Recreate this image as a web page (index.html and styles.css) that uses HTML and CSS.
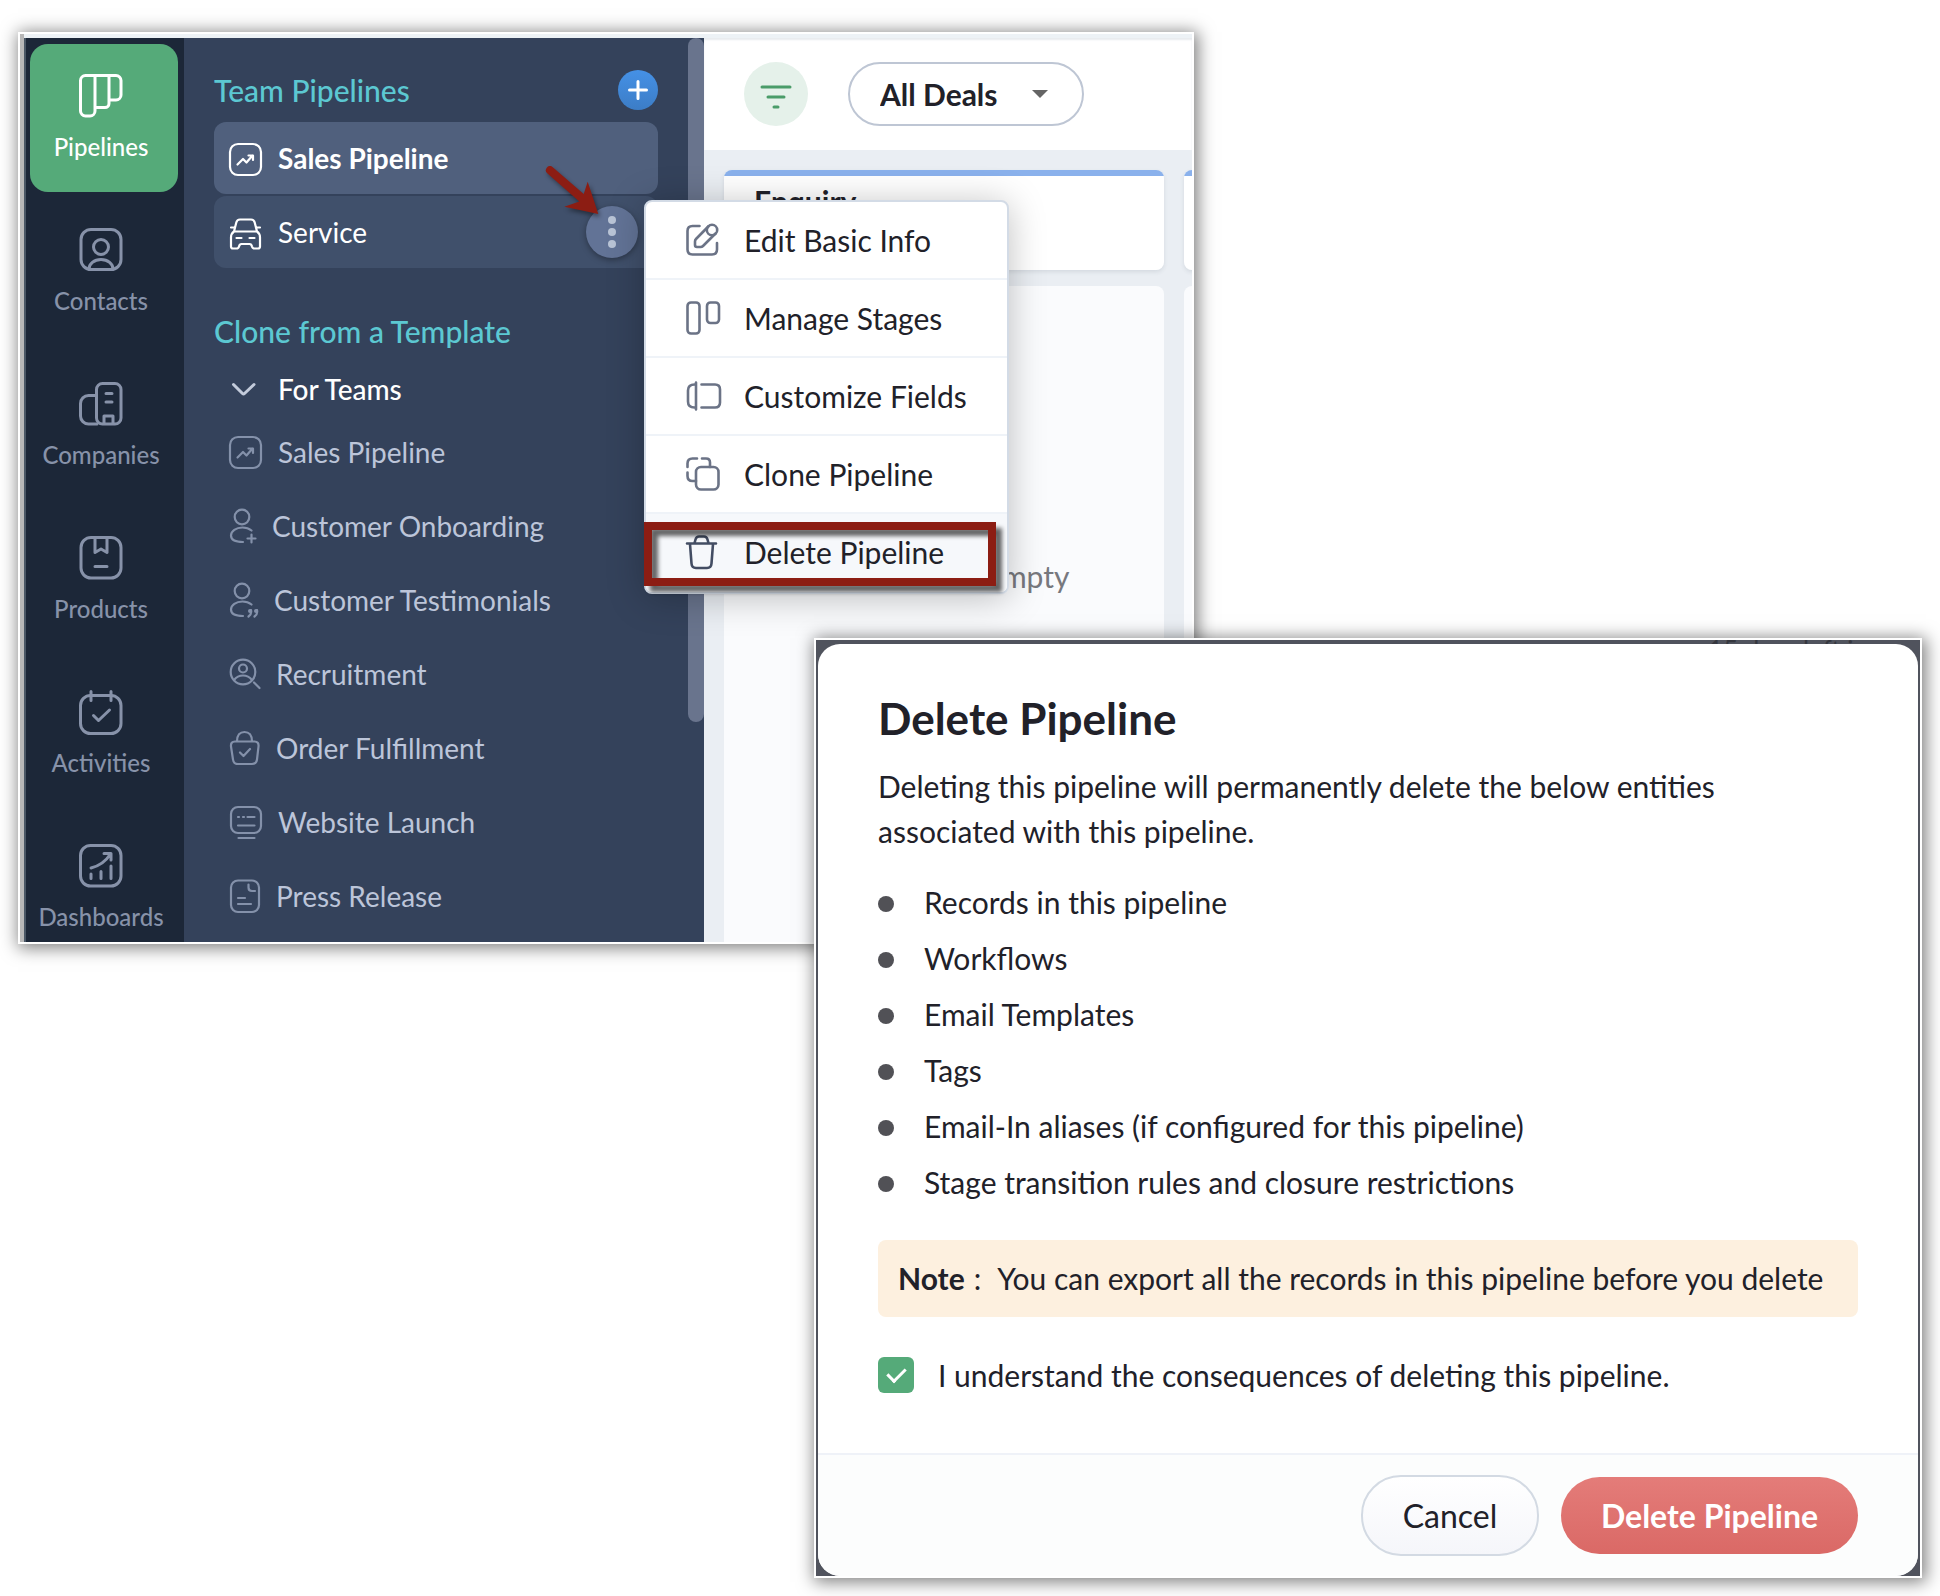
FILE: index.html
```html
<!DOCTYPE html>
<html lang="en">
<head>
<meta charset="utf-8">
<meta name="viewport" content="width=device-width, initial-scale=1">
<title>Delete Pipeline</title>
<link rel="stylesheet" href="styles.css">
</head>
<body>
<div class="stage">
  <section class="window app" aria-label="Pipelines">
    <nav class="nav">
      <a class="nav-item nav-item-active" href="#pipelines">
        <svg class="nav-icon" viewBox="0 0 44 44"><path d="M16 1.5H6.5a5 5 0 0 0-5 5v30.500a5 5 0 0 0 5 5H11a5 5 0 0 0 5-5zM16 1.500H30V29.500a4 4 0 0 1-4 4H16M30 1.500h7a5 5 0 0 1 5 5V21a5 5 0 0 1-5 5h-7"/></svg>
        Pipelines</a>
      <a class="nav-item" href="#contacts">
        <svg class="nav-icon" viewBox="0 0 44 44"><rect x="2" y="1.500" width="40" height="40" rx="10"/><circle cx="22" cy="19" r="7.500"/><path d="M10 41c0-5 5-9.500 12-9.500S34 36 34 41"/></svg>
        Contacts</a>
      <a class="nav-item" href="#companies">
        <svg class="nav-icon" viewBox="0 0 44 44"><path d="M17.500 13.500H9.500a8 8 0 0 0-8 8V34a8 8 0 0 0 8 8H18"/><rect x="17.500" y="1.500" width="24.500" height="40.500" rx="6"/><path d="M27 11.500h6M27 20h6M25 41v-7h9v7"/></svg>
        Companies</a>
      <a class="nav-item" href="#products">
        <svg class="nav-icon" viewBox="0 0 44 44"><rect x="2" y="1.500" width="40" height="40.500" rx="10"/><path d="M16 2v14.500l6-3.500 6 3.500V2M16 30.500h12"/></svg>
        Products</a>
      <a class="nav-item" href="#activities">
        <svg class="nav-icon" viewBox="0 0 44 44"><rect x="1.500" y="5.500" width="40.500" height="38" rx="10"/><path d="M12 1.500v9M32 1.500v9M14.500 25.500l5 5L30.500 20"/></svg>
        Activities</a>
      <a class="nav-item" href="#dashboards">
        <svg class="nav-icon" viewBox="0 0 44 44"><rect x="1.500" y="1.500" width="40.500" height="40.500" rx="10"/><path d="M12 24c8-2 15-7 19.500-14M25 9.500h7V16M12 30v4.500M22 27.500v7M32 22v12.500"/></svg>
        Dashboards</a>
    </nav>

    <aside class="sidebar">
      <div class="sidebar-scroll" aria-hidden="true"></div>
      <div class="section-head">
        <h2 class="section-title">Team Pipelines</h2>
        <button class="add-button" type="button" aria-label="Add pipeline">
          <svg class="add-icon" viewBox="0 0 20 20"><path d="M10 1.500v17M1.500 10h17"/></svg>
        </button>
      </div>
      <ul class="team-list">
        <li class="team-row team-row-active">
          <svg class="row-icon w32" viewBox="0 0 32 34"><rect x="1" y="1" width="31" height="31" rx="8"/><path d="M8.500 21.500l5.500-5.500 3.500 3.500 6-7M19.500 12.500h4.500v4.500"/></svg>
          <a class="row-link" href="#sales">Sales Pipeline</a>
        </li>
        <li class="team-row">
          <svg class="row-icon w32" viewBox="0 0 32 34"><path d="M5 14.500L7.300 5.500Q8 2.500 11 2.500H22Q25 2.500 25.700 5.500L28 14.500zM2 10.500h3M28 10.500h3M5 14.500q-3 2-3 6V29.500q0 2 2 2h3.500q2 0 2.500-2 .6-2.500 2.500-2.500h8q2 0 2.500 2.500.5 2 2.500 2H29q2 0 2-2v-9q0-4-3-6M7.500 21h5M20.500 21h5"/></svg>
          <a class="row-link" href="#service">Service</a>
          <button class="more-button" type="button" aria-label="More actions">
            <svg class="more-icon" viewBox="0 0 8 32"><circle cx="4" cy="4" r="4"/><circle cx="4" cy="16" r="4"/><circle cx="4" cy="28" r="4"/></svg>
          </button>
          <div class="menu">
            <button class="menu-item" type="button">
              <svg class="menu-icon" viewBox="0 0 36 34"><path d="M13.500 3H6.500Q1.500 3 1.500 8V26.500q0 5 5 5H26q5 0 5-5V20M22.300 3.500L10 16q-1 1-1 2.500V22q0 2 2 2h3.500q1.500 0 2.500-1L29.500 10.500"/><circle cx="26" cy="7" r="5.200"/></svg>
              Edit Basic Info</button>
            <button class="menu-item" type="button">
              <svg class="menu-icon" viewBox="0 0 36 34"><rect x="1.500" y="1.500" width="12" height="31" rx="3.500"/><rect x="21" y="1.500" width="12" height="20.500" rx="3.500"/></svg>
              Manage Stages</button>
            <button class="menu-item" type="button">
              <svg class="menu-icon" viewBox="0 0 36 34"><path d="M10 3.500v27M10 5.500H8.500Q2 5.500 2 11.500v11q0 6 6.500 6H10M15.500 5.500H29q5 0 5 5v13q0 5-5 5H15.500"/></svg>
              Customize Fields</button>
            <button class="menu-item" type="button">
              <svg class="menu-icon" viewBox="0 0 36 34"><rect x="10" y="10" width="22.500" height="22.500" rx="5"/><path d="M11 1.500H6.500Q1.500 1.500 1.500 6.500V10M16 1.500h4q4 0 4 4V10M1.500 15.500V19q0 5 5 5H10"/></svg>
              Clone Pipeline</button>
            <button class="menu-item menu-item-hover" type="button">
              <svg class="menu-icon" viewBox="0 0 36 34"><path d="M1 8.500h29M8.500 8l1-3.500Q10.300 1.500 13 1.500h5q2.700 0 3.500 3l1 3.500M4 9l1.500 19.500Q5.800 33 10 33H21q4.200 0 4.500-4.500L27 9"/></svg>
              Delete Pipeline</button>
            <div class="highlight" aria-hidden="true"></div>
          </div>
          <svg class="pointer" viewBox="0 0 60 52" aria-hidden="true"><path d="M6.500 1A4 4 0 0 0 1.500 7.500L33.300 35.500 18.300 40.700 52.300 48 41.700 15.700 37.700 28z"/></svg>
        </li>
      </ul>
      <h2 class="section-title section-title-clone">Clone from a Template</h2>
      <button class="group-toggle" type="button">
        <svg class="row-icon w32" viewBox="0 0 32 34"><path class="chevron" d="M4.500 12.500L13.500 21.500Q14.500 22.500 15.500 21.500L25 12.500"/></svg>
        For Teams</button>
      <ul class="template-list">
        <li><a class="template" href="#t1">
          <svg class="row-icon w32" viewBox="0 0 32 34"><rect x="1" y="2" width="31" height="31" rx="8"/><path d="M8.500 22.500l5.500-5.500 3.500 3.500 6-7M19.500 13.500h4.500v4.500"/></svg>
          Sales Pipeline</a></li>
        <li><a class="template" href="#t2">
          <svg class="row-icon w26" viewBox="0 0 26 34"><circle cx="13" cy="8" r="7.300"/><path d="M22.500 21.500C20 19.500 17 18.500 13.500 18.500 7 18.500 2 22 2 26.500S7 33 14 33M22.500 25.500v8M18.500 29.500h8"/></svg>
          Customer Onboarding</a></li>
        <li><a class="template" href="#t3">
          <svg class="row-icon w28" viewBox="0 0 28 34"><circle cx="13" cy="8" r="7.300"/><path d="M22.500 21.500C20 19.500 17 18.500 13.500 18.500 7 18.500 2 22 2 26.500S7 33 14 33M22 27q1 4-2.500 6.500M28 27q1 4-2.500 6.500"/><circle class="dot" cx="21" cy="28" r="2"/><circle class="dot" cx="27" cy="28" r="2"/></svg>
          Customer Testimonials</a></li>
        <li><a class="template" href="#t4">
          <svg class="row-icon w30" viewBox="0 0 30 34"><circle cx="14" cy="15" r="12.300"/><circle cx="14" cy="11.500" r="4"/><path d="M5 23q3.500-4.500 9-4.500t9 4.500M25 25.500l5.500 5.500"/></svg>
          Recruitment</a></li>
        <li><a class="template" href="#t5">
          <svg class="row-icon w30" viewBox="0 0 30 34"><path d="M8 10.500C8 4 11 1 15.500 1S23 4 23 10.500M6 10.500H25.500q4.500 0 4 5L28 28.500Q27.500 33 23 33H9Q4.500 33 4 28.500L2 15.500q-.5-5 4-5zM11 21.500l3.500 3.500L21 18"/></svg>
          Order Fulfillment</a></li>
        <li><a class="template" href="#t6">
          <svg class="row-icon w32" viewBox="0 0 32 34"><rect x="2" y="2" width="30" height="26" rx="7"/><path d="M9 12h1M14 12h1M18.500 12h7M9 20.500h16.500M9.500 33h16"/></svg>
          Website Launch</a></li>
        <li><a class="template" href="#t7">
          <svg class="row-icon w30" viewBox="0 0 30 34"><rect x="2" y="1.500" width="28" height="31.500" rx="7"/><path d="M19.500 5.500v3q0 3.500 3.500 3.500h3M9 19h7M9 25h13"/></svg>
          Press Release</a></li>
      </ul>
    </aside>

    <main class="content">
      <header class="toolbar">
        <button class="filter-button" type="button" aria-label="Filter">
          <svg class="filter-icon" viewBox="0 0 32 24"><path d="M2 2h28M8 12h16M14 22h4"/></svg>
        </button>
        <div class="select-wrap">
          <select class="deal-select" aria-label="Deals view"><option>All Deals</option></select>
          <svg class="caret" viewBox="0 0 16 8"><path d="M0 0h16L8 8z"/></svg>
        </div>
      </header>
      <div class="board">
        <section class="column">
          <h3 class="column-head">Enquiry</h3>
          <div class="column-body">This stage is empty</div>
        </section>
        <section class="column">
          <h3 class="column-head"></h3>
          <div class="column-body"></div>
        </section>
      </div>
    </main>
  </section>

  <section class="window overlay">
    <div class="trial" aria-hidden="true">15 days left in</div>
    <div class="dialog" role="dialog" aria-labelledby="dialog-title">
      <div class="dialog-body">
        <h1 class="dialog-title" id="dialog-title">Delete Pipeline</h1>
        <p class="dialog-text">Deleting this pipeline will permanently delete the below entities<br>associated with this pipeline.</p>
        <ul class="entity-list">
          <li class="entity">Records in this pipeline</li>
          <li class="entity">Workflows</li>
          <li class="entity">Email Templates</li>
          <li class="entity">Tags</li>
          <li class="entity">Email-In aliases (if configured for this pipeline)</li>
          <li class="entity">Stage transition rules and closure restrictions</li>
        </ul>
        <p class="note"><span class="note-label"><strong>Note</strong><span>:</span></span><span>You can export all the records in this pipeline before you delete</span></p>
        <label class="consent"><input class="checkbox" type="checkbox" checked>I understand the consequences of deleting this pipeline.</label>
      </div>
      <footer class="dialog-footer">
        <button class="button button-cancel" type="button">Cancel</button>
        <button class="button button-danger" type="button">Delete Pipeline</button>
      </footer>
    </div>
  </section>
</div>
</body>
</html>
```
FILE: styles.css
```css
* { box-sizing: border-box; }

body {
  margin: 0;
  background: #fff;
  color: #212129;
  font: 30px/36px Lato, Carlito, sans-serif;
}

h1, h2, h3, p, ul { margin: 0; padding: 0; }
ul { list-style: none; }
a { color: inherit; text-decoration: none; }
button, select { margin: 0; padding: 0; border: 0; background: none; color: inherit; font: inherit; }
svg { display: block; flex: none; overflow: visible; fill: none; stroke: currentColor; stroke-linecap: round; stroke-linejoin: round; }

.stage {
  display: grid;
  grid-template-columns: minmax(0, 796fr) minmax(0, 380fr) minmax(0, 728fr);
  grid-template-rows: 606px 306px auto;
  padding: 32px 18px 18px;
}

.window { border: 2px solid #fff; box-shadow: 2px 2px 16px 2px rgba(0, 0, 0, 0.5); }

.app {
  grid-area: 1 / 1 / 3 / 3;
  display: grid;
  grid-template-columns: 160px 520px minmax(0, 1fr);
  min-height: 0;
  overflow: hidden;
  padding: 4px 0 0 4px;
  background: linear-gradient(90deg, #b8b8b8 4px, #edf2f6 4px);
}

/* Primary navigation */
.nav {
  display: flex;
  flex-direction: column;
  gap: 6px;
  min-height: 0;
  padding: 6px 6px 0 4px;
  border-left: 2px solid #4b5866;
  background: #1c2738;
}
.nav-item {
  display: flex;
  flex: none;
  flex-direction: column;
  align-items: center;
  gap: 15px;
  height: 148px;
  padding: 30px 6px 0 0;
  border-radius: 18px;
  color: #8792a9;
  font-size: 24px;
  font-weight: 500;
  line-height: 28px;
}
.nav-item-active { background: #55aa79; color: #fff; }
.nav-icon { width: 44px; height: 44px; stroke-width: 3; }

/* Pipeline sidebar */
.sidebar {
  position: relative;
  z-index: 1;
  min-height: 0;
  padding: 32px 46px 0 30px;
  background: #34425b;
  font-size: 28px;
}
.sidebar-scroll {
  position: absolute;
  top: 0;
  right: 0;
  width: 16px;
  height: 684px;
  border-radius: 8px;
  background: #69748d;
}
.section-head { display: flex; align-items: center; justify-content: space-between; height: 40px; margin-bottom: 12px; }
.section-title { color: #5cc8d2; font-size: 30px; font-weight: 500; }
.section-title-clone { margin-top: 31px; line-height: 64px; }
.add-button {
  display: grid;
  place-items: center;
  width: 40px;
  height: 40px;
  border-radius: 50%;
  background: linear-gradient(#4591e6, #3c7dc6);
  color: #fff;
}
.add-icon { width: 20px; height: 20px; stroke-width: 3; }

.team-list { display: grid; gap: 2px; }
.team-row {
  position: relative;
  display: flex;
  align-items: center;
  gap: 17px;
  height: 72px;
  padding: 0 20px 0 15px;
  border-radius: 12px;
  background: #40506b;
  color: #fff;
}
.team-row-active { background: #50607d; font-weight: 700; }
.row-link { flex: 1; }
.row-icon { height: 34px; stroke-width: 2.2; }
.team-row .row-icon { margin-top: 4px; }
.w26 { width: 26px; }
.w28 { width: 28px; }
.w30 { width: 30px; }
.w32 { width: 32px; }
.dot { fill: currentColor; stroke: none; }
.more-button {
  display: grid;
  place-items: center;
  width: 52px;
  height: 52px;
  border-radius: 50%;
  background: #627396;
  box-shadow: 0 2px 6px rgba(0, 0, 0, 0.35);
  color: #b9c4d6;
}
.more-icon { width: 8px; height: 32px; fill: currentColor; stroke: none; }
.pointer {
  position: absolute;
  top: -30px;
  left: 332px;
  width: 60px;
  height: 52px;
  fill: #8c1d13;
  stroke: none;
  filter: drop-shadow(2px 3px 2px rgba(0, 0, 0, 0.4));
}

.group-toggle { display: flex; align-items: center; gap: 17px; height: 52px; padding-left: 15px; color: #fff; font-weight: 500; }
.chevron { stroke: #c3cbdb; stroke-width: 3; }
.template { display: flex; align-items: center; gap: 17px; height: 74px; padding-left: 15px; color: #bcc5d9; }
.template .row-icon { color: #8491aa; }

/* Row actions menu */
.menu {
  position: absolute;
  top: 4px;
  left: 430px;
  width: 365px;
  border: 2px solid #d3dbe6;
  border-radius: 8px;
  background: #fff;
  box-shadow: 0 4px 36px rgba(0, 0, 0, 0.25);
  color: #212129;
  font-size: 30px;
}
.menu-item {
  display: flex;
  align-items: center;
  gap: 22px;
  width: 100%;
  height: 78px;
  padding-left: 40px;
  border-bottom: 2px solid #eff3f8;
}
.menu-item-hover { border-bottom-color: #f6f8fb; border-radius: 0 0 6px 6px; background: #f6f8fb; }
.menu-icon { width: 36px; height: 34px; color: #6b7386; stroke-width: 2.6; }
.menu-item-hover .menu-icon { color: #434d63; }
.highlight {
  position: absolute;
  right: 11px;
  bottom: 6px;
  left: -2px;
  height: 64px;
  border: 8px solid #8c1d13;
  filter: drop-shadow(6px 6px 2px rgba(0, 0, 0, 0.6));
}

/* Board */
.content { display: flex; flex-direction: column; min-width: 0; min-height: 0; background: #eaeef3; }
.toolbar {
  display: flex;
  align-items: center;
  gap: 40px;
  height: 112px;
  padding: 0 40px;
  background: #fff;
  box-shadow: inset 0 2px 2px #e8ebef;
}
.filter-button { display: grid; place-items: center; width: 64px; height: 64px; padding-top: 6px; border-radius: 50%; background: #e5f1ea; color: #4a9c69; }
.filter-icon { width: 32px; height: 24px; stroke-width: 3; }
.select-wrap { position: relative; }
.deal-select {
  width: 236px;
  height: 64px;
  padding-left: 30px;
  border: 2px solid #bec6d4;
  border-radius: 32px;
  appearance: none;
  font-weight: 700;
}
.caret { position: absolute; top: 28px; right: 36px; width: 16px; height: 8px; fill: #656565; stroke: none; pointer-events: none; }
.board { display: flex; flex: 1; gap: 20px; min-height: 0; padding: 20px 0 0 20px; overflow: hidden; }
.column { display: flex; flex: none; flex-direction: column; gap: 16px; width: 440px; }
.column-head {
  height: 100px;
  padding: 13px 30px 0;
  border-radius: 8px;
  background: linear-gradient(#8ab1ec 6px, #fff 6px);
  box-shadow: 0 2px 4px rgba(60, 70, 90, 0.12);
  font-size: 30px;
  font-weight: 700;
}
.column-body {
  display: flex;
  flex: 1;
  justify-content: center;
  padding-top: 272px;
  border-radius: 8px 8px 0 0;
  background: #fafbfd;
  color: #77787e;
}

/* Delete confirmation */
.overlay {
  grid-area: 2 / 2 / 4 / 4;
  position: relative;
  z-index: 2;
  padding: 4px 2px 0;
  background: #50535d;
}
.trial { position: absolute; top: -8px; right: 52px; color: #35373f; font-size: 26px; }
.dialog { position: relative; overflow: hidden; border-radius: 22px; background: #fff; }
.dialog-body { padding: 47px 60px 60px; }
.dialog-title { margin-bottom: 19px; font-size: 44px; font-weight: 700; line-height: 54px; }
.dialog-text { margin-bottom: 20px; line-height: 45px; }
.entity-list { margin-bottom: 30px; }
.entity { display: flex; align-items: center; gap: 30px; line-height: 56px; }
.entity::before { width: 16px; height: 16px; margin-top: 4px; border-radius: 50%; background: #515156; content: ""; }
.note { display: flex; gap: 16px; margin-bottom: 40px; padding: 0 20px; border-radius: 8px; background: #fdf0df; line-height: 77px; }
.note-label { display: flex; gap: 9px; }
.consent { display: flex; align-items: center; gap: 24px; }
.checkbox { display: grid; place-items: center; width: 36px; height: 36px; margin: 0; border-radius: 6px; appearance: none; background: #55aa79; }
.checkbox:checked::after {
  width: 8px;
  height: 15px;
  margin-bottom: 4px;
  border: solid #fff;
  border-width: 0 3px 3px 0;
  transform: rotate(45deg);
  content: "";
}
.dialog-footer {
  display: flex;
  align-items: center;
  justify-content: flex-end;
  gap: 22px;
  padding: 20px 60px;
  border-top: 2px solid #eff2f8;
  background: #fcfdfd;
}
.button { border-radius: 40px; font-size: 32px; }
.button-cancel { width: 178px; height: 81px; border: 2px solid #d3dae3; background: linear-gradient(#fff, #f5f6fa); }
.button-danger { width: 297px; height: 77px; background: linear-gradient(#e47c79, #da6966); color: #fff; font-weight: 700; }
```
